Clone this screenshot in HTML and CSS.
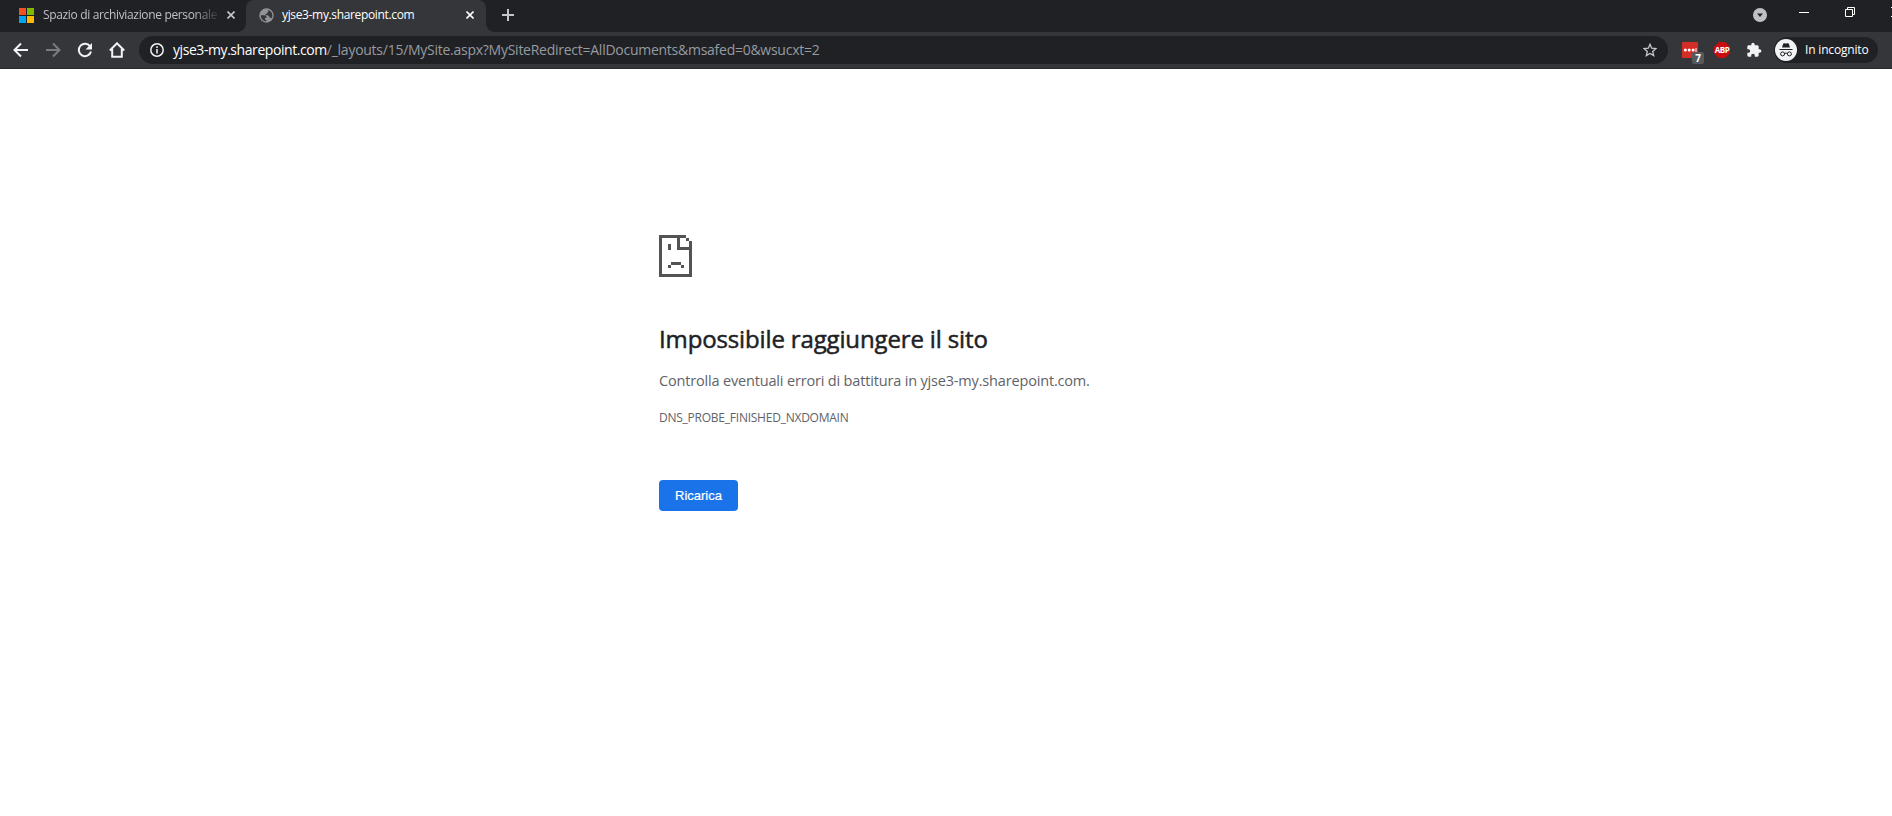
FILE: index.html
```html
<!DOCTYPE html>
<html lang="it">
<head>
    <meta charset="UTF-8">
    <meta name="viewport" content="width=device-width, initial-scale=1.0">
    <title>yjse3-my.sharepoint.com</title>
    <link rel="stylesheet" href="styles.css">
</head>
<body>
    <header>
        <div class="tabs">
            <div class="tab">
                <svg class="favicon" viewBox="0 0 15 15">
                    <path fill="#f25022" d="M0 0h7v7H0z"/>
                    <path fill="#7fba00" d="M8 0h7v7H8z"/>
                    <path fill="#00a4ef" d="M0 8h7v7H0z"/>
                    <path fill="#ffb900" d="M8 8h7v7H8z"/>
                </svg>
                <span class="title">Spazio di archiviazione personale</span>
                <svg class="close" viewBox="0 0 8 8"><path d="M.5.5l7 7M7.5.5l-7 7"/></svg>
            </div>
            <div class="tab active">
                <svg class="favicon" viewBox="0 0 15 15">
                    <circle cx="7.500" cy="7.500" r="7.200" fill="#919396"/>
                    <path fill="#35363a" d="M1.800 7.200h3.400c1.500 0 2.300.7 2.300 2v.8H5.800c0 1.300.4 1.800 1.500 1.900v1.400C4.200 13.200 1.700 10.600 1.800 7.200zM9.200 2c2.500.8 4.100 2.900 4.200 5.500 0 1.200-.4 2.200-1 3.100-.3-.6-.8-1-1.500-1h-.6c0-1.400-.5-2.300-2-2.300H6.600V5.800h1.600V4.300h1z"/>
                </svg>
                <span class="title">yjse3-my.sharepoint.com</span>
                <svg class="close" viewBox="0 0 8 8"><path d="M.5.5l7 7M7.5.5l-7 7"/></svg>
            </div>
            <svg class="new-tab" viewBox="0 0 12 12"><path d="M6 0v12M0 6h12"/></svg>
            <div class="window">
                <svg class="search" viewBox="0 0 14 14"><circle cx="7" cy="7" r="7"/><path d="M4 5.500h6L7 9z"/></svg>
                <svg class="minimize" viewBox="0 0 10 10"><path d="M0 5.500h10"/></svg>
                <svg class="restore" viewBox="0 0 10 10"><path d="M.5 2.500h7v7h-7zM2.500 2.500v-2h7v7h-2"/></svg>
                <svg class="exit" viewBox="0 0 10 10"><path d="M0 0l10 10M10 0L0 10"/></svg>
            </div>
        </div>
        <div class="toolbar">
            <svg class="nav" viewBox="0 0 16 16"><path d="M15 8H2M8 1.500L1.500 8 8 14.500"/></svg>
            <svg class="nav disabled" viewBox="0 0 16 16"><path d="M1 8h13M8 1.500L14.500 8 8 14.500"/></svg>
            <svg class="nav" viewBox="0 0 16 16"><path d="M13.300 4.700A6.200 6.200 0 1 0 14 9.500"/><path class="fill" d="M15 1v6.500H8.500z"/></svg>
            <svg class="nav" viewBox="0 0 16 16"><path d="M.8 8.500L8 1.300l7.200 7.200M3.200 7v7.800h9.600V7"/></svg>
            <div class="address">
                <svg class="info" viewBox="0 0 14 14"><circle cx="7" cy="7" r="6.200"/><path d="M7 6v4.500M7 3.300v1.600"/></svg>
                <span class="url"><b>yjse3-my.sharepoint.com</b>/_layouts/15/MySite.aspx?MySiteRedirect=AllDocuments&amp;msafed=0&amp;wsucxt=2</span>
                <svg class="star" viewBox="0 0 14 14"><path d="M7 1.300l1.700 3.900 4.200.4-3.200 2.800 1 4.200L7 10.400l-3.700 2.200 1-4.200L1.100 5.600l4.200-.4z"/></svg>
            </div>
            <div class="passwords">
                <svg viewBox="0 0 16 16"><rect width="16" height="16" rx="1" fill="#d32d27"/><g fill="#fff"><circle cx="3.300" cy="8" r="1.500"/><circle cx="7.200" cy="8" r="1.500"/><circle cx="11.100" cy="8" r="1.500"/><path d="M13.500 6h1v4h-1z"/></g></svg>
                <span>7</span>
            </div>
            <div class="abp">ABP</div>
            <svg class="puzzle" viewBox="0 0 24 24"><path d="M20.500 11H19V7c0-1.100-.9-2-2-2h-4V3.500C13 2.120 11.880 1 10.500 1S8 2.120 8 3.500V5H4c-1.100 0-1.990.9-1.990 2v3.800H3.500c1.490 0 2.700 1.210 2.700 2.700s-1.210 2.700-2.700 2.700H2V20c0 1.100.9 2 2 2h3.800v-1.500c0-1.490 1.210-2.700 2.700-2.700s2.700 1.210 2.700 2.700V22H17c1.100 0 2-.9 2-2v-4h1.500c1.380 0 2.500-1.120 2.500-2.500S21.880 11 20.500 11z"/></svg>
            <div class="incognito">
                <svg viewBox="0 0 22 22">
                    <circle cx="11" cy="11" r="11" fill="#f1f3f4"/>
                    <path fill="#202124" d="M7 8.500l1.200-3.800q.2-.7 1-.5l1.800.4 1.800-.4q.8-.2 1 .5L15 8.500z"/>
                    <path fill="none" stroke="#202124" d="M4.500 10.500h13M9.500 14.500q1.500-1 3 0"/>
                    <g fill="none" stroke="#202124"><circle cx="7.600" cy="14.900" r="2"/><circle cx="14.400" cy="14.900" r="2"/></g>
                </svg>
                <span>In incognito</span>
            </div>
        </div>
    </header>
    <main>
        <svg class="sad" viewBox="0 0 33 42" shape-rendering="crispEdges">
            <path d="M0 0h27v3h-6v9h9V6h3v36H0zM3 3v36h27V15H18V3zM27 3h3v3h-3zM9 9h3v6H9zM12 27h10v3H12zM9 30h3v3H9zM22 30h3v3h-3z"/>
        </svg>
        <h1>Impossibile raggiungere il sito</h1>
        <p>Controlla eventuali errori di battitura in yjse3-my.sharepoint.com.</p>
        <div class="code">DNS_PROBE_FINISHED_NXDOMAIN</div>
        <button>Ricarica</button>
    </main>
</body>
</html>
```
FILE: styles.css
```css
body {
    margin: 0;
    background-color: #fff;
    font-family: "Open Sans", "Noto Sans", sans-serif;
    overflow: hidden;
}
svg {
    flex: none;
    fill: none;
}
header {
    background-color: #35363a;
    border-bottom: 1px solid #28292c;
}
.tabs {
    display: flex;
    align-items: center;
    height: 32px;
    background-color: #202124;
}
.tab {
    display: flex;
    align-items: center;
    box-sizing: border-box;
    width: 246px;
    height: 32px;
    padding: 0 11px 2px 19px;
    color: #bdc1c6;
    font-size: 12px;
}
.tab.active {
    position: relative;
    width: 240px;
    padding: 0 12px 2px 13px;
    border-radius: 8px 8px 0 0;
    background-color: #35363a;
    color: #fff;
}
/* curved feet of the open tab */
.active::before, .active::after {
    content: "";
    position: absolute;
    bottom: 0;
    width: 8px;
    height: 8px;
}
.active::before {
    left: -8px;
    background: radial-gradient(circle at 0 0, transparent 7.5px, #35363a 8px);
}
.active::after {
    right: -8px;
    background: radial-gradient(circle at 100% 0, transparent 7.5px, #35363a 8px);
}
.favicon {
    width: 15px;
    height: 15px;
}
.title {
    flex: 1;
    margin: 0 12px 0 8px;
    padding-bottom: 1px;
    white-space: nowrap;
    letter-spacing: -0.35px;
}
.tab:not(.active) .title {
    margin: 0 6px 0 9px;
    letter-spacing: -0.34px;
    mask-image: linear-gradient(to right, #000 84%, transparent);
}
.close {
    width: 8px;
    height: 8px;
    stroke: #c4c7ca;
    stroke-width: 1.6;
}
.active .close {
    stroke: #fff;
}
.new-tab {
    width: 12px;
    height: 12px;
    margin: 0 0 2px 16px;
    stroke: #c4c7ca;
    stroke-width: 2;
}
.window {
    display: flex;
    align-items: center;
    height: 24px;
    margin: 0 -9px 8px auto;
    stroke: #fff;
}
.search {
    width: 14px;
    height: 14px;
    margin: 6px 32px 0 0;
    stroke: none;
    fill: #bdc1c6;
}
.search path {
    fill: #202124;
}
.window .minimize, .window .restore, .window .exit {
    width: 10px;
    height: 10px;
    margin-right: 36px;
}
.window .exit {
    margin-right: 0;
}
.toolbar {
    display: flex;
    align-items: center;
    height: 36px;
    padding: 0 14px 0 13px;
}
.nav {
    width: 16px;
    height: 16px;
    margin-right: 16px;
    stroke: #f1f3f4;
    stroke-width: 2;
}
.nav.disabled {
    stroke: #7b7c7f;
}
.fill {
    fill: #f1f3f4;
    stroke: none;
}
.address {
    display: flex;
    flex: 1;
    align-items: center;
    height: 28px;
    margin-left: -2px;
    padding: 0 11px;
    border-radius: 14px;
    background-color: #202124;
}
.info {
    width: 14px;
    height: 14px;
    stroke: #f1f3f4;
    stroke-width: 1.5;
}
.url {
    flex: 1;
    margin-left: 9px;
    padding-bottom: 1px;
    color: #969ba1;
    font-size: 14px;
    letter-spacing: -0.26px;
}
.url b {
    color: #fff;
    font-weight: 400;
    letter-spacing: -0.43px;
}
.star {
    width: 14px;
    height: 14px;
    stroke: #c4c7ca;
    stroke-width: 1.3;
}
.passwords {
    position: relative;
    width: 16px;
    height: 16px;
    margin-left: 14px;
}
.passwords svg {
    display: block;
    width: 16px;
    height: 16px;
}
.passwords span {
    position: absolute;
    top: 10px;
    left: 10px;
    width: 12px;
    height: 12px;
    border-radius: 2px;
    background-color: #55585c;
    color: #fff;
    font-size: 10px;
    font-weight: 700;
    line-height: 13px;
    text-align: center;
}
.abp {
    width: 16px;
    height: 16px;
    margin-left: 16px;
    clip-path: polygon(30% 0, 70% 0, 100% 30%, 100% 70%, 70% 100%, 30% 100%, 0 70%, 0 30%);
    background-color: #c70d0d;
    color: #fff;
    font: 700 8px/16px "Open Sans", sans-serif;
    letter-spacing: -0.4px;
    text-align: center;
}
.puzzle {
    width: 16px;
    height: 16px;
    margin-left: 16px;
    fill: #f1f3f4;
}
.incognito {
    display: flex;
    align-items: center;
    box-sizing: border-box;
    width: 104px;
    height: 26px;
    margin-left: 12px;
    padding-left: 1px;
    border-radius: 13px;
    background-color: #202124;
    color: #fff;
    font-size: 12px;
    white-space: nowrap;
}
.incognito svg {
    width: 22px;
    height: 22px;
}
.incognito span {
    margin-left: 8px;
    padding-bottom: 1px;
    letter-spacing: -0.18px;
}
main {
    width: 600px;
    margin: 0 auto;
    padding: 166px 0 0 26px;
    color: #5f6368;
}
.sad {
    display: block;
    width: 33px;
    height: 42px;
    fill: #535353;
}
h1 {
    margin: 46px 0 0;
    color: #202124;
    font-size: 24px;
    font-weight: 500;
    letter-spacing: -0.14px;
    line-height: 32px;
    -webkit-text-stroke: 0.5px #202124;
}
p {
    margin: 14px 0 0;
    font-size: 14.5px;
    letter-spacing: -0.17px;
    line-height: 24px;
}
.code {
    margin-top: 16px;
    font-size: 12px;
    letter-spacing: -0.24px;
    line-height: 18px;
}
button {
    display: block;
    width: 79px;
    height: 31px;
    margin-top: 53px;
    padding: 0;
    border: none;
    border-radius: 4px;
    background-color: #1a73e8;
    color: #fff;
    font: 13px "Liberation Sans", sans-serif;
    -webkit-text-stroke: 0.2px #fff;
}
```
